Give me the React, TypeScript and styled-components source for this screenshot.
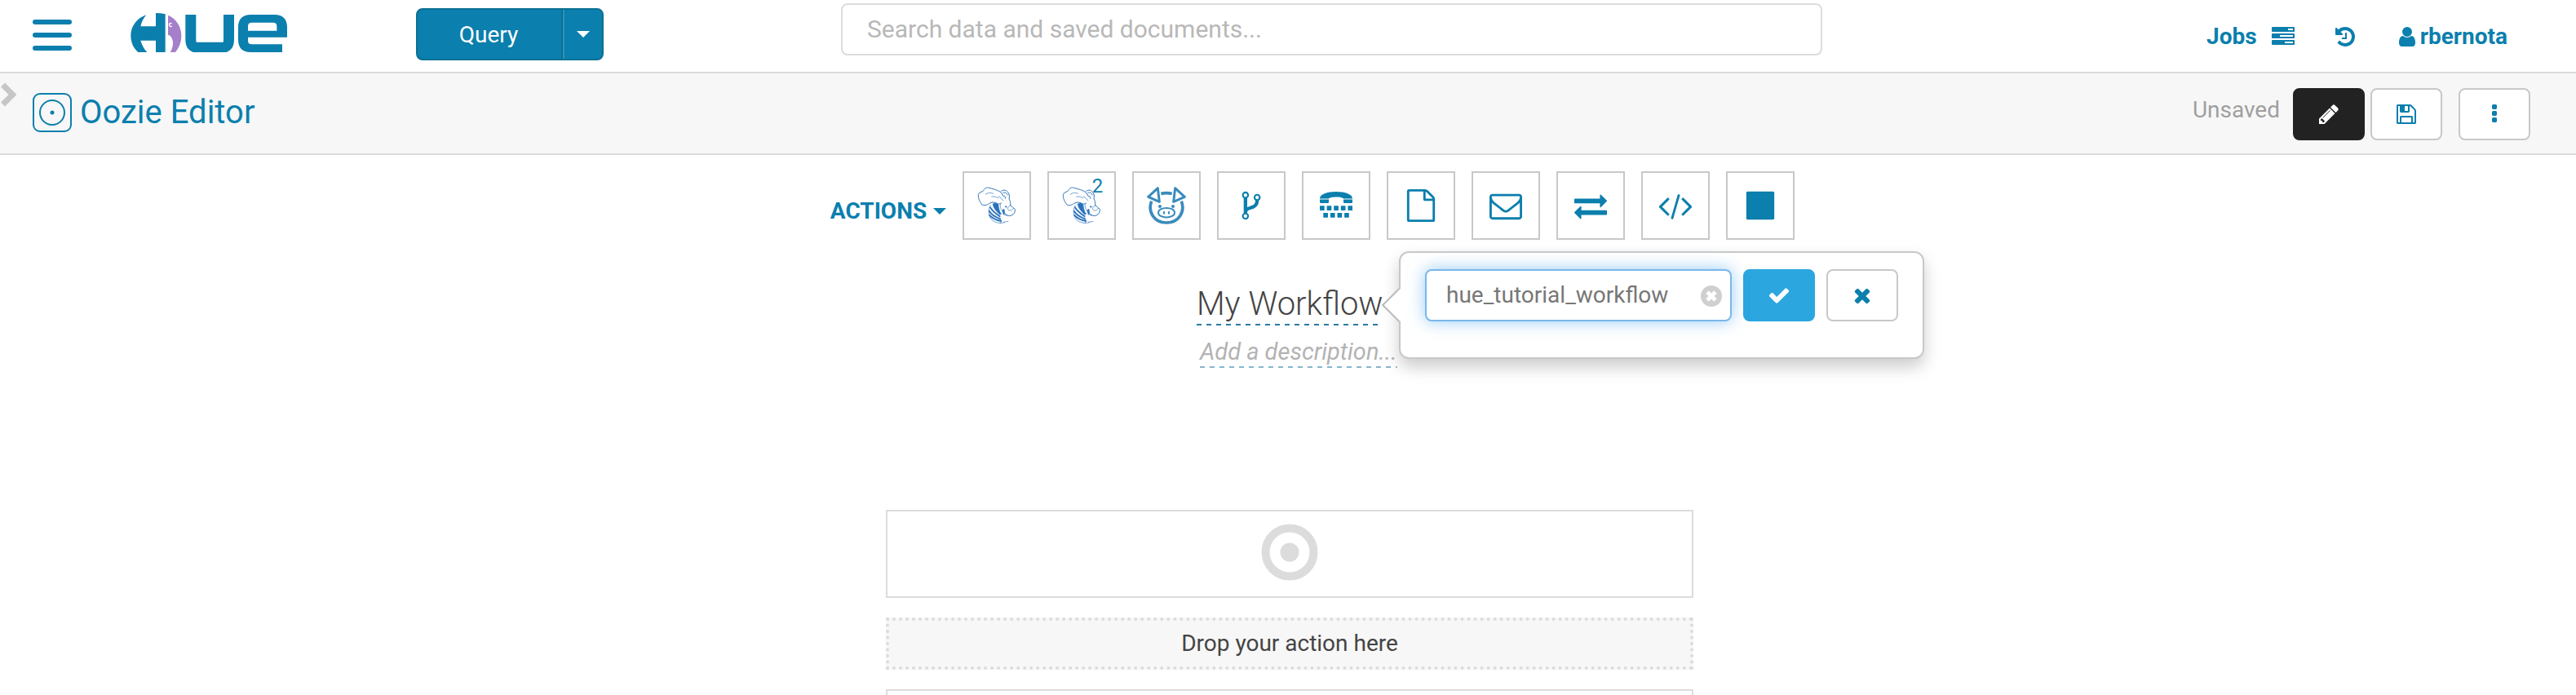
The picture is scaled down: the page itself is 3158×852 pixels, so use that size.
import React from "react";
import styled, { createGlobalStyle, css } from "styled-components";

const blue = "#0b7fad";

const GlobalStyle = createGlobalStyle`
  *, *::before, *::after { box-sizing: border-box; }
  body { margin: 0; background: #fff; }
  body, button, input { font-family: Roboto, "Liberation Sans", sans-serif; font-size: 28px; line-height: 36px; color: #444; }
  button { margin: 0; padding: 0; cursor: pointer; }
  svg { display: block; flex: none; }
`;

const Page = styled.div`
  height: 100vh;
  overflow: hidden;
`;

/* ---- top navigation ---- */
const Navbar = styled.header`
  display: grid;
  grid-template-columns: 1031fr 1203fr 924fr;
  border-bottom: 2px solid #dcdcdc;
`;

const NavLeft = styled.div`
  display: flex;
  align-items: center;
  height: 84px;
  padding-left: 40px;
`;

const MenuButton = styled.button`
  display: flex;
  flex-direction: column;
  gap: 10px;
  width: 48px;
  padding-top: 2px;
  border: 0;
  background: none;
`;

const MenuBar = styled.span`
  height: 6px;
  border-radius: 3px;
  background: ${blue};
`;

const LogoLink = styled.a`
  height: 52px;
  margin-left: 72px;
`;

const QueryGroup = styled.div`
  display: flex;
  height: 64px;
  margin-left: 158px;
  border: 2px solid #0b7193;
  border-radius: 8px;
  background: ${blue};
`;

const QueryButton = styled.button`
  width: 178px;
  padding: 2px 2px 0 0;
  border: 0;
  border-right: 2px solid #0b7193;
  background: none;
  color: #fff;
`;

const QueryMore = styled.button`
  display: flex;
  align-items: center;
  justify-content: center;
  width: 48px;
  border: 0;
  border-left: 2px solid #2b93bd;
  background: none;
`;

const Caret = styled.span`
  border: 8px solid transparent;
  border-top-color: currentColor;
  border-bottom: 0;
`;

const LightCaret = styled(Caret)`
  color: #fff;
`;

const SearchArea = styled.div`
  padding-top: 4px;
`;

const SearchInput = styled.input`
  display: block;
  width: 100%;
  height: 64px;
  padding: 0 30px 2px;
  border: 2px solid #dcdcdc;
  border-radius: 8px;
  background: #fff;
  font-size: 30px;
  outline: 0;
  &::placeholder { color: #b8b8b8; opacity: 1; }
`;

const NavRight = styled.nav`
  display: flex;
  align-items: center;
  justify-content: flex-end;
  gap: 48px;
  height: 88px;
  padding: 2px 84px 0 0;
`;

const NavLink = styled.a<{ $gap?: number }>`
  display: flex;
  align-items: center;
  gap: ${(p) => p.$gap ?? 0}px;
  color: ${blue};
  font-weight: 700;
  text-decoration: none;
`;

/* ---- editor bar ---- */
const EditorBar = styled.div`
  display: flex;
  align-items: flex-start;
  height: 100px;
  padding-right: 56px;
  border-bottom: 2px solid #dcdcdc;
  background: #f7f7f7;
`;

const PanelToggle = styled.button`
  width: 40px;
  padding-top: 10px;
  border: 0;
  background: none;
  color: #c6c6c6;
`;

const EditorTitle = styled.a`
  display: flex;
  align-items: center;
  gap: 10px;
  flex: 1;
  height: 96px;
  color: ${blue};
  font-size: 40px;
  text-decoration: none;
`;

const SaveStatus = styled.span`
  padding: 27px 16px 0 0;
  color: #9f9f9f;
`;

const EditorButtons = styled.div`
  display: flex;
  gap: 7px;
  padding-top: 18px;
`;

const IconButton = styled.button<{ $tone?: "dark" | "primary"; $apart?: boolean }>`
  display: flex;
  align-items: center;
  justify-content: center;
  width: 88px;
  height: 64px;
  margin-left: ${(p) => (p.$apart ? 13 : 0)}px;
  border: 2px solid #c8c8c8;
  border-radius: 8px;
  background: #fff;
  color: ${blue};
  ${(p) => p.$tone === "dark" && css`border-color: #222; background: #222; color: #fff;`}
  ${(p) => p.$tone === "primary" && css`border-color: #2ba6df; background: #2ba6df; color: #fff;`}
`;

/* ---- workflow canvas ---- */
const Canvas = styled.main`
  display: flex;
  flex-direction: column;
  align-items: center;
  padding: 20px 0 0 4px;
`;

const ActionBar = styled.div`
  display: flex;
  gap: 20px;
  padding-left: 56px;
`;

const ActionsMenu = styled.button`
  display: flex;
  align-items: center;
  gap: 8px;
  height: 84px;
  padding-top: 14px;
  border: 0;
  background: none;
  color: ${blue};
  font-weight: 700;
`;

const ActionTile = styled.button`
  position: relative;
  display: flex;
  align-items: center;
  justify-content: center;
  width: 84px;
  height: 84px;
  border: 2px solid #c8c8c8;
  background: #fff;
  color: ${blue};
`;

const TileBadge = styled.sup`
  position: absolute;
  top: 0;
  right: 14px;
  font-size: 24px;
  line-height: 32px;
`;

const Heading = styled.div`
  position: relative;
  display: flex;
  flex-direction: column;
  align-items: flex-start;
  gap: 14px;
  width: 228px;
  margin-top: 55px;
`;

const editable = css`
  padding-bottom: 2px;
  background: repeating-linear-gradient(90deg, var(--dash) 0 6px, transparent 6px 12px) bottom / 100% 2px no-repeat;
  white-space: nowrap;
`;

const WorkflowName = styled.h1`
  ${editable}
  --dash: #2a7ba5;
  width: 100%;
  margin: 0;
  font-size: 40px;
  font-weight: 300;
  line-height: 48px;
  text-align: center;
`;

const Description = styled.p`
  ${editable}
  --dash: #85b6cd;
  margin: 0 0 0 4px;
  color: #b3b3b3;
  font-size: 29px;
  font-style: italic;
`;

const Popover = styled.form`
  position: absolute;
  top: -41px;
  left: calc(100% + 20px);
  display: flex;
  gap: 14px;
  padding: 20px 30px 44px;
  border: 2px solid #c8c8c8;
  border-radius: 12px;
  background: #fff;
  box-shadow: 0 10px 20px rgba(0, 0, 0, 0.2);
  &::before {
    content: "";
    position: absolute;
    top: 49px;
    left: -17px;
    width: 30px;
    height: 30px;
    border: solid #bbb;
    border-width: 0 0 2px 2px;
    background: #fff;
    transform: rotate(45deg);
  }
`;

const NameField = styled.div`
  position: relative;
`;

const NameInput = styled.input`
  display: block;
  width: 376px;
  height: 64px;
  padding: 0 48px 2px 24px;
  border: 2px solid #7ab7ea;
  border-radius: 8px;
  background: #fff;
  box-shadow: 0 0 20px rgba(82, 168, 236, 0.6);
  color: #777;
  outline: 0;
`;

const ClearButton = styled.button`
  position: absolute;
  top: 20px;
  right: 12px;
  border: 0;
  background: none;
`;

const Steps = styled.section`
  display: flex;
  flex-direction: column;
  gap: 24px;
  width: 990px;
  max-width: 100%;
  margin-top: 174px;
`;

const NodeBox = styled.div`
  display: flex;
  justify-content: center;
  height: 108px;
  padding-top: 15px;
  border: 2px solid #dcdcdc;
`;

const DropZone = styled.div`
  display: flex;
  align-items: center;
  justify-content: center;
  height: 64px;
  border: 4px dotted #dcdcdc;
  background: #f7f7f7;
`;

/* ---- icons ---- */
const Glyph = ({ d, size = 28 }: { d: string; size?: number }) => (
  <svg width={size} height={size} viewBox="0 0 1792 1792" fill="currentColor" aria-hidden="true">
    <path d={d} />
  </svg>
);

const icons = {
  tasks: "M1024 1408h640v-128h-640v128zm-384-512h1024v-128h-1024v128zm640-512h384v-128h-384v128zm512 832v256q0 26-19 45t-45 19h-1664q-26 0-45-19t-19-45v-256q0-26 19-45t45-19h1664q26 0 45 19t19 45zm0-512v256q0 26-19 45t-45 19h-1664q-26 0-45-19t-19-45v-256q0-26 19-45t45-19h1664q26 0 45 19t19 45zm0-512v256q0 26-19 45t-45 19h-1664q-26 0-45-19t-19-45v-256q0-26 19-45t45-19h1664q26 0 45 19t19 45z",
  history: "M1664 896q0 156-61 298t-164 245-245 164-298 61q-172 0-327-72.5t-264-204.5q-7-10-6.5-22.5t8.5-20.5l137-138q10-9 25-9 16 2 23 12 73 95 179 147t225 52q104 0 198.5-40.5t163.5-109.5 109.5-163.5 40.5-198.5-40.5-198.5-109.5-163.5-163.5-109.5-198.5-40.5q-98 0-188 35.5t-160 101.5l137 138q31 30 14 69-17 40-59 40h-448q-26 0-45-19t-19-45v-448q0-42 40-59 39-17 69 14l130 129q107-101 244.5-156.5t284.5-55.5q156 0 298 61t245 164 164 245 61 298zm-640-288v448q0 14-9 23t-23 9h-320q-14 0-23-9t-9-23v-64q0-14 9-23t23-9h224v-352q0-14 9-23t23-9h64q14 0 23 9t9 23z",
  user: "M1536 1399q0 109-62.5 187t-150.5 78h-854q-88 0-150.5-78t-62.5-187q0-85 8.5-160.5t31.5-152 58.5-131 94-89 134.5-34.5q131 128 313 128t313-128q76 0 134.5 34.5t94 89 58.5 131 31.5 152 8.5 160.5zm-256-887q0 159-112.5 271.5t-271.5 112.5-271.5-112.5-112.5-271.5 112.5-271.5 271.5-112.5 271.5 112.5 112.5 271.5z",
  pencil: "M491 1536l91-91-235-235-91 91v107h128v128h107zm523-928q0-22-22-22-10 0-17 7l-542 542q-7 7-7 17 0 22 22 22 10 0 17-7l542-542q7-7 7-17zm-54-192l416 416-832 832h-416v-416zm683 96q0 53-37 90l-166 166-416-416 166-165q36-38 90-38 53 0 91 38l235 234q37 39 37 91z",
  save: "M512 1536h768v-384h-768v384zm896 0h128v-896q0-14-10-38.5t-20-34.5l-281-281q-10-10-34-20t-39-10v416q0 40-28 68t-68 28h-576q-40 0-68-28t-28-68v-416h-128v1280h128v-416q0-40 28-68t68-28h832q40 0 68 28t28 68v416zm-384-928v-320q0-13-9.5-22.5t-22.5-9.5h-192q-13 0-22.5 9.5t-9.5 22.5v320q0 13 9.5 22.5t22.5 9.5h192q13 0 22.5-9.5t9.5-22.5zm640 32v928q0 40-28 68t-68 28h-1344q-40 0-68-28t-28-68v-1344q0-40 28-68t68-28h928q40 0 88 20t76 48l280 280q28 28 48 76t20 88z",
  more: "M1088 1248v192q0 40-28 68t-68 28h-192q-40 0-68-28t-28-68v-192q0-40 28-68t68-28h192q40 0 68 28t28 68zm0-512v192q0 40-28 68t-68 28h-192q-40 0-68-28t-28-68v-192q0-40 28-68t68-28h192q40 0 68 28t28 68zm0-512v192q0 40-28 68t-68 28h-192q-40 0-68-28t-28-68v-192q0-40 28-68t68-28h192q40 0 68 28t28 68z",
  fork: "M672 1472q0-40-28-68t-68-28-68 28-28 68 28 68 68 28 68-28 28-68zm0-1152q0-40-28-68t-68-28-68 28-28 68 28 68 68 28 68-28 28-68zm640 128q0-40-28-68t-68-28-68 28-28 68 28 68 68 28 68-28 28-68zm96 0q0 52-26 96.5t-70 69.5q-2 287-226 414-67 38-203 81-128 40-169.5 71t-41.5 100v26q44 25 70 69.5t26 96.5q0 80-56 136t-136 56-136-56-56-136q0-52 26-96.5t70-69.5v-820q-44-25-70-69.5t-26-96.5q0-80 56-136t136-56 136 56 56 136q0 52-26 96.5t-70 69.5v497q54-26 154-57 55-17 87.5-29.5t70.5-31 59-39.5 40.5-51 28-69.5 8.5-91.5q-44-25-70-69.5t-26-96.5q0-80 56-136t136-56 136 56 56 136z",
  file: "M1596 380q28 28 48 76t20 88v1152q0 40-28 68t-68 28h-1344q-40 0-68-28t-28-68v-1600q0-40 28-68t68-28h896q40 0 88 20t76 48zm-444-244v376h376q-10-29-22-41l-313-313q-12-12-41-22zm384 1528v-1024h-416q-40 0-68-28t-28-68v-416h-768v1536h1280z",
  mail: "M1664 1504v-768q-32 36-69 66-268 206-426 338-51 43-83 67t-86.5 48.5-102.5 24.5h-2q-48 0-102.5-24.5t-86.5-48.5-83-67q-158-132-426-338-37-30-69-66v768q0 13 9.5 22.5t22.5 9.5h1472q13 0 22.5-9.5t9.5-22.5zm0-1051v-24.5l-.5-13-3-12.5-5.5-9-9-7.5-14-2.5h-1472q-13 0-22.5 9.5t-9.5 22.5q0 168 147 284 193 152 401 317 6 5 35 29.5t46 37.5 44.5 31.5 50.5 27.5 43 9h2q20 0 43-9t50.5-27.5 44.5-31.5 46-37.5 35-29.5q208-165 401-317 54-43 100.5-115.5t46.5-131.5zm128-37v1088q0 66-47 113t-113 47h-1472q-66 0-113-47t-47-113v-1088q0-66 47-113t113-47h1472q66 0 113 47t47 113z",
  exchange: "M1792 1184v192q0 13-9.5 22.5t-22.5 9.5h-1376v192q0 13-9.5 22.5t-22.5 9.5q-12 0-24-10l-319-320q-9-9-9-22 0-14 9-23l320-320q9-9 23-9 13 0 22.5 9.5t9.5 22.5v192h1376q13 0 22.5 9.5t9.5 22.5zm0-544q0 14-9 23l-320 320q-9 9-23 9-13 0-22.5-9.5t-9.5-22.5v-192h-1376q-13 0-22.5-9.5t-9.5-22.5v-192q0-13 9.5-22.5t22.5-9.5h1376v-192q0-14 9-23t23-9q12 0 24 10l319 319q9 9 9 23z",
  code: "M553 1399l-50 50q-10 10-23 10t-23-10l-466-466q-10-10-10-23t10-23l466-466q10-10 23-10t23 10l50 50q10 10 10 23t-10 23l-393 393 393 393q10 10 10 23t-10 23zm591-1067l-373 1291q-4 13-15.5 19.5t-23.5 2.5l-62-17q-13-4-19.5-15.5t-2.5-24.5l373-1291q4-13 15.5-19.5t23.5-2.5l62 17q13 4 19.5 15.5t2.5 24.5zm657 651l-466 466q-10 10-23 10t-23-10l-50-50q-10-10-10-23t10-23l393-393-393-393q-10-10-10-23t10-23l50-50q10-10 23-10t23 10l466 466q10 10 10 23t-10 23z",
  stop: "M1664 192v1408q0 26-19 45t-45 19h-1408q-26 0-45-19t-19-45v-1408q0-26 19-45t45-19h1408q26 0 45 19t19 45z",
  check: "M1671 566q0 40-28 68l-724 724-136 136q-28 28-68 28t-68-28l-136-136-362-362q-28-28-28-68t28-68l136-136q28-28 68-28t68 28l294 295 656-657q28-28 68-28t68 28l136 136q28 28 28 68z",
  times: "M1490 1322q0 40-28 68l-136 136q-28 28-68 28t-68-28l-294-294-294 294q-28 28-68 28t-68-28l-136-136q-28-28-28-68t28-68l294-294-294-294q-28-28-28-68t28-68l136-136q28-28 68-28t68 28l294 294 294-294q28-28 68-28t68 28l136 136q28 28 28 68t-28 68l-294 294 294 294q28 28 28 68z",
};

const Logo = () => (
  <svg width="192" height="48" viewBox="480 48 576 144" role="img" aria-label="Hue">
    <path fill={blue} d="M538 55C504 66 481 96 481 131C481 155 490 176 508 192H541C530 180 522 166 517 149H573V192H608V52Q591 48 573 48V97H517C521 80 528 66 538 55Z" />
    <path fill="#a57fca" d="M618 56C648 68 667 98 667 131C667 155 658 176 645 192H626C634 180 636 167 636 158C636 142 628 130 618 128Z" />
    <path fill="none" stroke="#fff" strokeWidth="4" d="M632 87C625 83 621 88 623 93C625 99 631 98 632 96" />
    <path fill="none" stroke={blue} strokeWidth="39" d="M701.5 54V146C701.5 165 709 175 727 175H816C834 175 841.500 165 841.500 146V54" />
    <path fill={blue} fillRule="evenodd" d="M1038 192H922C892 192 876 176 876 146V100C876 70 892 54 922 54H1010C1040 54 1056 70 1056 100V137H912V150Q912 163 926 163H1038ZM912 113H1018V96Q1018 83 1004 83H926Q912 83 912 96Z" />
  </svg>
);

const ChevronRight = () => (
  <svg width="20" height="32" viewBox="0 0 20 32" fill="none" stroke="currentColor" strokeWidth="7" aria-hidden="true">
    <path d="M3.500 4L15.500 16L3.500 28" strokeLinejoin="miter" />
  </svg>
);

const OozieIcon = () => (
  <svg width="48" height="48" viewBox="0 0 48 48" fill="none" stroke={blue} strokeWidth="2" aria-hidden="true">
    <rect x="1" y="1" width="46" height="46" rx="8" />
    <circle cx="24" cy="24" r="15" />
    <circle cx="24" cy="24" r="2.500" fill={blue} stroke="none" />
  </svg>
);

const BeeIcon = () => (
  <svg width="48" height="46" viewBox="594 124 144 138" fill="none" stroke="#2f74bb" strokeWidth="3" strokeLinejoin="round" aria-hidden="true">
    <path d="M612 190C601 176 597 162 598 153C599 145 612 143 617 138C622 128 629 125 638 128C650 131 660 134 668 137C679 141 686 148 689 158" />
    <path d="M612 190C625 196 632 188 641 184C650 179 661 181 666 185C672 189 679 188 682 183" />
    <path d="M624 153C631 145 643 145 654 149M646 160Q661 157 673 166M672 158Q682 163 690 176" strokeWidth="2" />
    <path d="M680 143C686 134 700 134 706 143C712 149 714 158 711 168M688 147C696 142 704 148 706 155M690 160Q696 152 698 168M711 168C715 174 717 184 716 193M716 193C722 197 728 200 728 203C734 202 735 213 730 221C725 229 715 232 706 230L694 226" />
    <path d="M716 193C706 196 703 207 711 211C719 213 726 207 728 202M682 183C676 194 679 205 688 214C693 221 700 226 706 228" strokeWidth="2" />
    <path d="M696 197l6-2v5zM686 210l7-4 2 16-4 5z" fill="#2f74bb" strokeWidth="2" />
    <path d="M651 187C661 181 670 184 672 191C674 204 676 218 684 224L676 226C665 214 654 205 651 187Z" fill="#2873bd" strokeWidth="1" />
    <path d="M641 198C649 214 662 223 679 234M637 212C645 226 660 236 681 243M638 227C650 241 664 247 684 250" strokeWidth="6" />
    <path d="M643 191C633 208 635 232 648 246C662 258 682 259 695 255M684 246l-6 13M690 254L709 251" strokeWidth="2" />
  </svg>
);

const PigIcon = () => (
  <svg width="48" height="46" viewBox="108 123 144 138" fill="none" stroke="#3a8bbd" strokeLinejoin="round" aria-hidden="true">
    <path strokeWidth="11" d="M125 176C110 215 135 255 180 255C225 255 250 215 235 176M160 148Q180 144 200 148" />
    <path strokeWidth="9" d="M113 160L148 128L154 178ZM247 160L212 128L206 178Z" />
    <path strokeWidth="6" d="M150 218C150 195 210 195 210 218C210 241 150 241 150 218Z" />
    <g fill="#3a8bbd" stroke="none">
      <circle cx="156" cy="195" r="6" />
      <circle cx="204" cy="195" r="6" />
      <ellipse cx="171" cy="218" rx="3.500" ry="6" />
      <ellipse cx="189" cy="218" rx="3.500" ry="6" />
    </g>
  </svg>
);

const TtyIcon = () => (
  <svg width="40" height="40" viewBox="0 -3 40 40" fill="currentColor" aria-hidden="true">
    <path d="M0 8.500C0 3 9 0 20 0S40 3 40 8.500H29C29 7.500 25 6.500 20 6.500S11 7.500 11 8.500Z" />
    <path d="M0 9.500H11V13Q11 14 10 14H1Q0 14 0 13ZM29 9.500H40V13Q40 14 39 14H30Q29 14 29 13Z" />
    {[0, 8.6, 17.2, 25.8, 34.4].map((x) => <rect key={x} x={x} y="17.200" width="5.700" height="5.700" rx="0.600" />)}
    {[4.3, 12.9, 21.5, 30.1].map((x) => <rect key={x} x={x} y="26" width="5.700" height="5.700" rx="0.600" />)}
  </svg>
);

const ClearIcon = () => (
  <svg width="26" height="26" viewBox="0 0 26 26" aria-hidden="true">
    <circle cx="13" cy="13" r="13" fill="#cfcfcf" />
    <path d="M8 8L18 18M18 8L8 18" stroke="#fff" strokeWidth="5" />
  </svg>
);

const TargetIcon = () => (
  <svg width="70" height="70" viewBox="0 0 70 70" fill="none" aria-hidden="true">
    <circle cx="35" cy="35" r="29.500" stroke="#dcdcdc" strokeWidth="10" />
    <circle cx="35" cy="35" r="11.500" fill="#dcdcdc" />
  </svg>
);

const actions = [
  { name: "Hive", icon: <BeeIcon /> },
  { name: "HiveServer2", icon: <BeeIcon />, badge: "2" },
  { name: "Pig", icon: <PigIcon /> },
  { name: "Sqoop", icon: <Glyph d={icons.fork} size={40} /> },
  { name: "Shell", icon: <TtyIcon /> },
  { name: "Java", icon: <Glyph d={icons.file} size={40} /> },
  { name: "Email", icon: <Glyph d={icons.mail} size={40} /> },
  { name: "DistCp", icon: <Glyph d={icons.exchange} size={40} /> },
  { name: "Ssh", icon: <Glyph d={icons.code} size={40} /> },
  { name: "Kill", icon: <Glyph d={icons.stop} size={40} /> },
];

export default function App() {
  return (
    <Page>
      <GlobalStyle />
      <Navbar>
        <NavLeft>
          <MenuButton type="button" aria-label="Menu">
            <MenuBar />
            <MenuBar />
            <MenuBar />
          </MenuButton>
          <LogoLink href="#home"><Logo /></LogoLink>
          <QueryGroup>
            <QueryButton type="button">Query</QueryButton>
            <QueryMore type="button" aria-label="More query types"><LightCaret /></QueryMore>
          </QueryGroup>
        </NavLeft>
        <SearchArea>
          <SearchInput type="search" aria-label="Search" placeholder="Search data and saved documents..." />
        </SearchArea>
        <NavRight>
          <NavLink href="#jobs" $gap={18}>Jobs <Glyph d={icons.tasks} /></NavLink>
          <NavLink href="#history" aria-label="History"><Glyph d={icons.history} /></NavLink>
          <NavLink href="#user" $gap={2}><Glyph d={icons.user} /> rbernota</NavLink>
        </NavRight>
      </Navbar>

      <EditorBar>
        <PanelToggle type="button" aria-label="Show assist panel"><ChevronRight /></PanelToggle>
        <EditorTitle href="#editor"><OozieIcon />Oozie Editor</EditorTitle>
        <SaveStatus>Unsaved</SaveStatus>
        <EditorButtons>
          <IconButton type="button" aria-label="Edit" $tone="dark"><Glyph d={icons.pencil} /></IconButton>
          <IconButton type="button" aria-label="Save"><Glyph d={icons.save} /></IconButton>
          <IconButton type="button" aria-label="More" $apart><Glyph d={icons.more} /></IconButton>
        </EditorButtons>
      </EditorBar>

      <Canvas>
        <ActionBar>
          <ActionsMenu type="button">ACTIONS <Caret /></ActionsMenu>
          {actions.map((a) => (
            <ActionTile key={a.name} type="button" aria-label={a.name}>
              {a.icon}
              {a.badge && <TileBadge>{a.badge}</TileBadge>}
            </ActionTile>
          ))}
        </ActionBar>

        <Heading>
          <WorkflowName>My Workflow</WorkflowName>
          <Description>Add a description...</Description>
          <Popover onSubmit={(e) => e.preventDefault()}>
            <NameField>
              <NameInput type="text" aria-label="Workflow name" defaultValue="hue_tutorial_workflow" />
              <ClearButton type="button" aria-label="Clear"><ClearIcon /></ClearButton>
            </NameField>
            <IconButton type="submit" aria-label="Confirm" $tone="primary"><Glyph d={icons.check} /></IconButton>
            <IconButton type="button" aria-label="Cancel"><Glyph d={icons.times} /></IconButton>
          </Popover>
        </Heading>

        <Steps>
          <NodeBox><TargetIcon /></NodeBox>
          <DropZone>Drop your action here</DropZone>
          <NodeBox />
        </Steps>
      </Canvas>
    </Page>
  );
}
